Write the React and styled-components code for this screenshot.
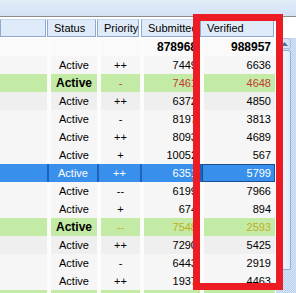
import styled, { createGlobalStyle } from "styled-components"

const GlobalStyle = createGlobalStyle`
  html, body {
    margin: 0;
    padding: 0;
    background: #ffffff;
    overflow: hidden;
  }
  body {
    font-family: "Liberation Sans", Arial, sans-serif;
  }
`

const GREEN = "#c3eba6"
const BLUE = "#3990ec"
const BLUE_LINE = "#1f63bd"
const GAP = "#fbfdfb"

const Frame = styled.div`
  position: relative;
  width: 296px;
  height: 293px;
  overflow: hidden;
  background: #ffffff;
`

const TopBand = styled.div`
  height: 16px;
  background: linear-gradient(#e3edf9, #d3e2f5);
  border-bottom: 1px solid #8c8c8c;
`

const HeaderRow = styled.div`
  display: flex;
  height: 18px;
  margin-top: 2px;
  margin-bottom: 1px;
`

const HeaderCell = styled.div`
  box-sizing: border-box;
  width: ${(p) => p.$w}px;
  margin-left: ${(p) => p.$ml || 0}px;
  height: 18px;
  padding-left: 6px;
  background: #e0ebf9;
  border: 1px solid #8ea9d1;
  border-top-color: #c8d8ee;
  font-size: 11px;
  line-height: 16px;
  color: #000;
  white-space: nowrap;
  overflow: hidden;
`

const Body = styled.div`
  display: flex;
`

const Table = styled.div`
  width: 275px;
  display: flex;
  flex-direction: column;
`

const Row = styled.div`
  display: flex;
  height: 18px;
`

const Cell = styled.div`
  box-sizing: border-box;
  width: ${(p) => p.$w}px;
  height: 18px;
  border-left: ${(p) => (p.$sel ? (p.$gap ? 2 : 0) : p.$gap)}px solid
    ${(p) => (p.$sel ? BLUE_LINE : GAP)};
  background: ${(p) => p.$bg};
  text-align: ${(p) => p.$align || "left"};
  padding-right: ${(p) => p.$pad || 0}px;
  font-size: ${(p) => (p.$bold ? 12 : 11)}px;
  font-weight: ${(p) => (p.$bold ? "bold" : "normal")};
  line-height: 18px;
  color: ${(p) => p.$color};
  white-space: nowrap;
  overflow: hidden;
  box-shadow: ${(p) => (p.$focus ? "inset 0 0 0 1px #1b4f94" : "none")};
`

const ScrollBar = styled.div`
  width: 20px;
  margin-left: 1px;
  height: 255px;
  background-color: #c9dbf2;
  background-image: repeating-conic-gradient(#bcd1ee 0 25%, #d6e4f7 0 50%);
  background-size: 2px 2px;
  display: flex;
  flex-direction: column;
  gap: 1px;
`

const ScrollButton = styled.div`
  width: 13px;
  height: 11px;
  margin-left: 2px;
  box-sizing: border-box;
  border: 1px solid #a7c0e3;
  border-radius: 2px;
  background: linear-gradient(90deg, #e7effb, #cfdef4);
  display: flex;
  align-items: center;
  justify-content: center;
`

const Thumb = styled.div`
  width: 13px;
  height: 220px;
  margin-left: 2px;
  box-sizing: border-box;
  border: 1px solid #95b1da;
  border-radius: 2px;
  background: linear-gradient(90deg, #f6f9fe, #e2ecfa);
`

const Marker = styled.div`
  position: absolute;
  left: 193px;
  top: 14px;
  width: 90px;
  height: 276px;
  box-sizing: border-box;
  border: 7px solid #ed1c24;
  pointer-events: none;
`

const headers = [
  { w: 46, ml: 0, label: "" },
  { w: 49, ml: 1, label: "Status" },
  { w: 42, ml: 1, label: "Priority" },
  { w: 58, ml: 2, label: "Submitted" },
  { w: 74, ml: 1, label: "Verified" },
]

const RED = "#c23a32"
const OLIVE = "#bfae1c"

// kind: n normal, d darker, t totals, g green, s selected
const rows = [
  { kind: "t", st: "", pr: "", sub: "878968", ver: "988957" },
  { kind: "n", st: "Active", pr: "++", sub: "7449", ver: "6636" },
  { kind: "g", st: "Active", pr: "-", sub: "7461", ver: "4648", tone: RED },
  { kind: "d", st: "Active", pr: "++", sub: "6372", ver: "4850" },
  { kind: "n", st: "Active", pr: "-", sub: "8197", ver: "3813" },
  { kind: "n", st: "Active", pr: "++", sub: "8093", ver: "4689" },
  { kind: "n", st: "Active", pr: "+", sub: "10052", ver: "567" },
  { kind: "s", st: "Active", pr: "++", sub: "6351", ver: "5799" },
  { kind: "n", st: "Active", pr: "--", sub: "6199", ver: "7966" },
  { kind: "n", st: "Active", pr: "+", sub: "674", ver: "894" },
  { kind: "g", st: "Active", pr: "--", sub: "7548", ver: "2593", tone: OLIVE },
  { kind: "d", st: "Active", pr: "++", sub: "7290", ver: "5425" },
  { kind: "n", st: "Active", pr: "-", sub: "6443", ver: "2919" },
  { kind: "n", st: "Active", pr: "++", sub: "1937", ver: "4463" },
  { kind: "g", st: "", pr: "", sub: "", ver: "" },
]

const bgFor = (kind) =>
  ({ n: "#f6f6f6", d: "#efefef", t: "#fafafa", g: GREEN, s: BLUE })[kind]

const DataRow = ({ r }) => {
  const sel = r.kind === "s"
  const bg = bgFor(r.kind)
  const ink = sel ? "#ffffff" : "#000000"
  const tone = r.tone || ink
  const strong = r.kind === "g"
  const totals = r.kind === "t"
  return (
    <Row>
      <Cell $w={47} $gap={0} $bg={bg} $sel={sel} $color={ink} />
      <Cell $w={50} $gap={4} $bg={bg} $sel={sel} $color={ink} $align="center" $bold={strong}>
        {r.st}
      </Cell>
      <Cell $w={43} $gap={4} $bg={bg} $sel={sel} $color={tone} $align="center">
        {r.pr}
      </Cell>
      <Cell $w={60} $gap={4} $bg={bg} $sel={sel} $color={tone} $align="right" $pad={3} $bold={totals}>
        {r.sub}
      </Cell>
      <Cell $w={75} $gap={4} $bg={bg} $sel={sel} $focus={sel} $color={tone} $align="right" $pad={4} $bold={totals}>
        {r.ver}
      </Cell>
    </Row>
  )
}

export default function App() {
  return (
    <Frame>
      <GlobalStyle />
      <TopBand />
      <HeaderRow>
        {headers.map((h, i) => (
          <HeaderCell key={i} $w={h.w} $ml={h.ml}>
            {h.label}
          </HeaderCell>
        ))}
      </HeaderRow>
      <Body>
        <Table>
          {rows.map((r, i) => (
            <DataRow key={i} r={r} />
          ))}
        </Table>
        <ScrollBar>
          <ScrollButton>
            <svg width="7" height="4" viewBox="0 0 7 4">
              <path d="M0 4 L3.5 0 L7 4 Z" fill="#4d6fa8" />
            </svg>
          </ScrollButton>
          <Thumb />
        </ScrollBar>
      </Body>
      <Marker />
    </Frame>
  )
}
